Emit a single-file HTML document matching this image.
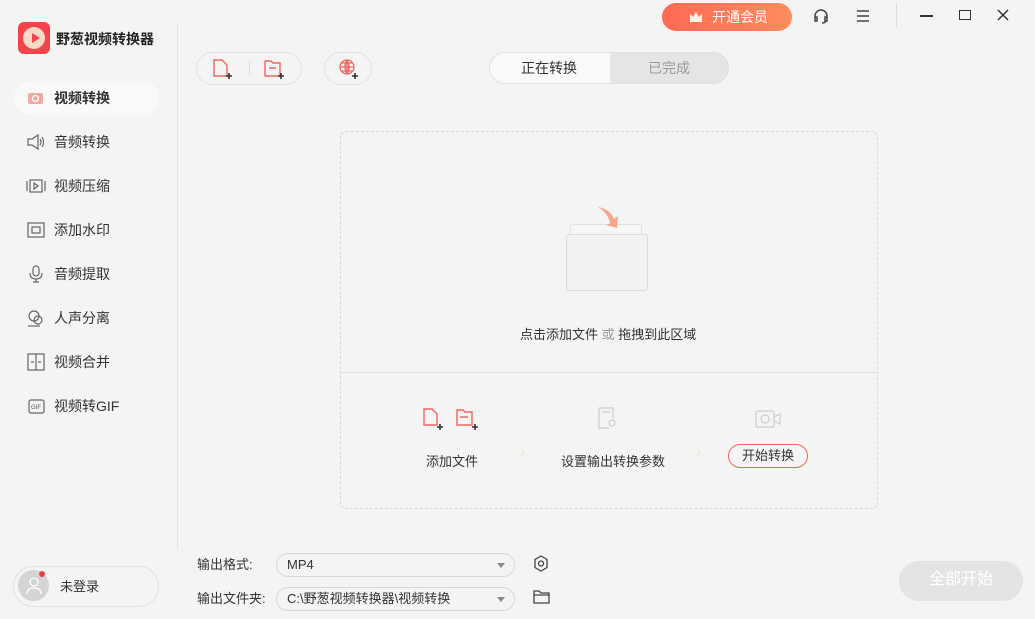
<!DOCTYPE html>
<html><head><meta charset="utf-8"><style>
*{margin:0;padding:0;box-sizing:border-box}
body{width:1035px;height:619px;background:#f4f4f4;font-family:"Liberation Sans","Noto Sans CJK SC",sans-serif;color:#333;position:relative;overflow:hidden;font-size:13px}
.a{position:absolute}
.nav{position:absolute;left:26px;font-size:14px;color:#333;display:flex;align-items:center;height:20px}
.nav svg{width:20px;height:20px;margin-right:8px}
</style></head><body>
<div class="a" style="left:18px;top:22px;width:32px;height:32px;background:#f2444a;border-radius:6px"></div>
<div class="a" style="left:23px;top:27px;width:22px;height:22px;background:#f8d9c6;border-radius:50%"></div>
<svg class="a" style="left:27px;top:30px" width="16" height="16"><path d="M5 3 L13 8 L5 13Z" fill="#f2444a"/></svg>
<div class="a" style="left:56px;top:29px;font-size:14px;font-weight:bold;color:#222">野葱视频转换器</div>
<div class="a" style="left:177px;top:25px;width:1px;height:525px;background:#e2e2e2"></div>

<div class="a" style="left:14px;top:81px;width:145px;height:34px;background:#f9f9f9;border-radius:17px"></div>
<div class="nav" style="top:88px"><svg viewBox="0 0 20 20"><rect x="2" y="5" width="15" height="11" rx="2" fill="#f4a9a0"/><circle cx="9.5" cy="10.5" r="3" fill="none" stroke="#fff" stroke-width="1.3"/></svg><b style="font-weight:bold">视频转换</b></div>
<div class="nav" style="top:132px"><svg viewBox="0 0 20 20" fill="none" stroke="#666" stroke-width="1.2"><path d="M2 7h4l6-4v14l-6-4H2z"/><path d="M14 7q2 3 0 6M16 5q3 5 0 10"/></svg>音频转换</div>
<div class="nav" style="top:176px"><svg viewBox="0 0 20 20" fill="none" stroke="#666" stroke-width="1.2"><rect x="4" y="4" width="12" height="12"/><path d="M8 7l4 3-4 3z M1 5v10M19 5v10"/></svg>视频压缩</div>
<div class="nav" style="top:220px"><svg viewBox="0 0 20 20" fill="none" stroke="#666" stroke-width="1.2"><rect x="2" y="3" width="16" height="14"/><rect x="6" y="7" width="8" height="6"/></svg>添加水印</div>
<div class="nav" style="top:264px"><svg viewBox="0 0 20 20" fill="none" stroke="#666" stroke-width="1.2"><rect x="7" y="2" width="6" height="10" rx="3"/><path d="M4 9q0 6 6 6t6-6M10 15v3M7 18h6"/></svg>音频提取</div>
<div class="nav" style="top:308px"><svg viewBox="0 0 20 20" fill="none" stroke="#666" stroke-width="1.2"><circle cx="8" cy="8" r="5"/><circle cx="12" cy="12" r="4"/><path d="M2 18h12"/></svg>人声分离</div>
<div class="nav" style="top:352px"><svg viewBox="0 0 20 20" fill="none" stroke="#666" stroke-width="1.2"><rect x="2" y="2" width="16" height="16"/><path d="M10 2v16M5 10h3M12 10h3"/></svg>视频合并</div>
<div class="nav" style="top:396px"><svg viewBox="0 0 20 20" fill="none" stroke="#666" stroke-width="1.2"><rect x="3" y="4" width="15" height="13" rx="2"/><text x="5" y="13" font-size="6" fill="#555" stroke="none">GIF</text></svg>视频转GIF</div>

<div class="a" style="left:13px;top:566px;width:146px;height:41px;border:1px solid #e2e2e2;border-radius:20px"></div>
<div class="a" style="left:18px;top:570px;width:31px;height:31px;border-radius:50%;background:#d4d4d4"></div>
<svg class="a" style="left:25px;top:575px" width="18" height="20" fill="none" stroke="#fff" stroke-width="1.3"><circle cx="9" cy="7" r="4"/><path d="M2 19q0-6 7-6t7 6"/></svg>
<div class="a" style="left:39px;top:571px;width:6px;height:6px;border-radius:50%;background:#f03d3d"></div>
<div class="a" style="left:60px;top:576px;font-size:13px">未登录</div>

<div class="a" style="left:662px;top:3px;width:130px;height:28px;border-radius:14px;background:linear-gradient(90deg,#ff6a55,#ff8c5e)"></div>
<svg class="a" style="left:689px;top:10px" width="14" height="13"><path d="M1 4l3 3 3-5 3 5 3-3v8H1z" fill="#fff3e6"/></svg>
<div class="a" style="left:712px;top:7px;color:#fff;font-size:14px">开通会员</div>
<svg class="a" style="left:813px;top:8px" width="16" height="16" fill="none" stroke="#444" stroke-width="1.5"><path d="M2 10V8a6 6 0 0112 0v2M2 9h2v4H2zM12 9h2v4h-2zM13 13q-1 2-4 2"/></svg>
<svg class="a" style="left:856px;top:10px" width="14" height="12" stroke="#444" stroke-width="1.5"><path d="M1 1h12M1 6h12M1 11h12"/></svg>
<div class="a" style="left:896px;top:3px;width:1px;height:24px;background:#ddd"></div>
<div class="a" style="left:920px;top:15px;width:13px;height:1.5px;background:#333"></div>
<div class="a" style="left:959px;top:10px;width:12px;height:10px;border:1.5px solid #333"></div>
<svg class="a" style="left:997px;top:9px" width="12" height="12" stroke="#333" stroke-width="1.5"><path d="M1 1l10 10M11 1L1 11"/></svg>

<div class="a" style="left:196px;top:52px;width:106px;height:33px;border:1px solid #e2e2e2;border-radius:17px"></div>
<svg class="a" style="left:212px;top:58px" width="22" height="22" fill="none" stroke="#f0665d" stroke-width="1.4"><path d="M2 2h8l5 5v11H2z"/><path d="M14 18h6M17 15v6" stroke="#333" stroke-width="1.6"/></svg>
<div class="a" style="left:249px;top:61px;width:1px;height:14px;background:#ddd"></div>
<svg class="a" style="left:264px;top:58px" width="22" height="22" fill="none" stroke="#f0665d" stroke-width="1.4"><path d="M1 3h6l2 2h7v13H1z M5 10h7"/><path d="M14 18h6M17 15v6" stroke="#333" stroke-width="1.6"/></svg>
<div class="a" style="left:324px;top:52px;width:48px;height:33px;border:1px solid #e2e2e2;border-radius:17px"></div>
<svg class="a" style="left:338px;top:58px" width="22" height="22" fill="none" stroke="#f0665d" stroke-width="1.3"><circle cx="9" cy="9" r="7"/><path d="M2 9h14M9 2v14M4 5h10M4 13h10M9 2q-4 7 0 14M9 2q4 7 0 14"/><path d="M14 18h6M17 15v6" stroke="#333" stroke-width="1.6"/></svg>

<div class="a" style="left:489px;top:52px;width:240px;height:32px;border:1px solid #e0e0e0;border-radius:16px;background:#e6e4e4;overflow:hidden"><div style="width:120px;height:100%;background:#f9f9f9"></div></div>
<div class="a" style="left:521px;top:58px;font-size:14px;color:#333">正在转换</div>
<div class="a" style="left:648px;top:58px;font-size:14px;color:#999">已完成</div>

<div class="a" style="left:340px;top:131px;width:538px;height:378px;border:1px dashed #d8d8d8;border-radius:6px"></div>
<div class="a" style="left:341px;top:372px;width:536px;height:1px;background:#e2e2e2"></div>
<div class="a" style="left:570px;top:224px;width:72px;height:12px;border:1px solid #e0e0e0;border-radius:3px;background:#f6f6f6"></div>
<div class="a" style="left:566px;top:234px;width:82px;height:57px;border:1px solid #dcdcdc;border-radius:3px;background:#f2f2f2"></div>
<svg class="a" style="left:596px;top:205px" width="30" height="28"><path d="M2 2q12 2 16 12l4-3-1 12-11-3 4-2Q12 8 2 2z" fill="#f5a68e"/></svg>
<div class="a" style="left:520px;top:324px;font-size:13px;color:#333">点击添加文件 <span style="color:#999">或</span> 拖拽到此区域</div>

<svg class="a" style="left:422px;top:407px" width="24" height="24" fill="none" stroke="#f0665d" stroke-width="1.4"><path d="M2 2h8l5 5v11H2z"/><path d="M15 20h6M18 17v6" stroke="#333" stroke-width="1.6"/></svg>
<svg class="a" style="left:455px;top:407px" width="26" height="24" fill="none" stroke="#f0665d" stroke-width="1.4"><path d="M2 3h6l2 2h7v13H2z M5 10h8"/><path d="M17 20h6M20 17v6" stroke="#333" stroke-width="1.6"/></svg>
<div class="a" style="left:426px;top:451px;font-size:13px">添加文件</div>
<div class="a" style="left:520px;top:444px;color:#f1e6c6;font-size:16px">›</div>
<svg class="a" style="left:597px;top:406px" width="22" height="24" fill="none" stroke="#ccc" stroke-width="1.2"><path d="M2 2h14v10M2 2v20h10M5 6h8"/><circle cx="15" cy="17" r="3"/></svg>
<div class="a" style="left:561px;top:451px;font-size:13px">设置输出转换参数</div>
<div class="a" style="left:696px;top:444px;color:#f1e6c6;font-size:16px">›</div>
<svg class="a" style="left:754px;top:409px" width="28" height="20" fill="none" stroke="#ccc" stroke-width="1.2"><rect x="2" y="2" width="18" height="16" rx="2"/><path d="M20 8l6-3v10l-6-3"/><circle cx="11" cy="10" r="4"/></svg>
<div class="a" style="left:728px;top:444px;width:80px;height:24px;border:1px solid #f0665d;border-radius:12px;text-align:center;line-height:21px;font-size:13px">开始转换</div>

<div class="a" style="left:197px;top:554px;font-size:13px">输出格式:</div>
<div class="a" style="left:276px;top:553px;width:239px;height:24px;border:1px solid #d8d8d8;border-radius:12px;padding-left:10px;line-height:21px;font-size:13px">MP4</div>
<div class="a" style="left:497px;top:563px;border:4px solid transparent;border-top:5px solid #888"></div>
<svg class="a" style="left:533px;top:555px" width="16" height="17" fill="none" stroke="#444" stroke-width="1.3"><path d="M8 1l6 3.5v8L8 16l-6-3.5v-8z"/><circle cx="8" cy="8.5" r="2.5"/></svg>
<div class="a" style="left:197px;top:588px;font-size:13px">输出文件夹:</div>
<div class="a" style="left:276px;top:587px;width:239px;height:24px;border:1px solid #d8d8d8;border-radius:12px;padding-left:10px;line-height:21px;font-size:13px">C:\野葱视频转换器\视频转换</div>
<div class="a" style="left:497px;top:597px;border:4px solid transparent;border-top:5px solid #888"></div>
<svg class="a" style="left:533px;top:590px" width="17" height="14" fill="none" stroke="#444" stroke-width="1.3"><path d="M1 1h5l2 2h8v10H1z M1 5h15"/></svg>

<div class="a" style="left:899px;top:561px;width:124px;height:40px;border-radius:20px;background:#e6e3e3;color:#fff;font-size:16px;text-align:center;line-height:38px">全部开始</div>
</body></html>
